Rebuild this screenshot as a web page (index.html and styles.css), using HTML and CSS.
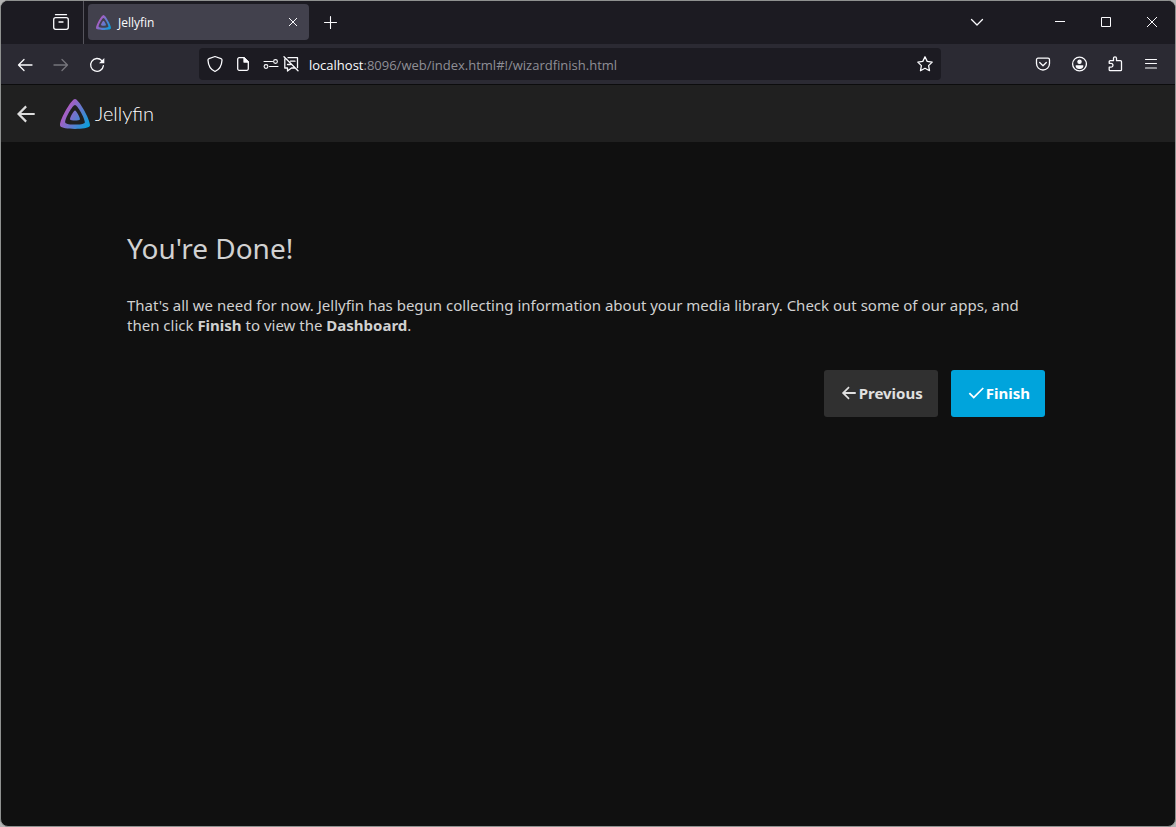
FILE: index.html
```html
<!DOCTYPE html>
<html lang="en">
<head>
<meta charset="utf-8">
<meta name="viewport" content="width=device-width, initial-scale=1">
<title>Jellyfin</title>
<link rel="stylesheet" href="styles.css">
</head>
<body>
<svg class="defs" width="0" height="0" aria-hidden="true">
  <defs>
    <linearGradient id="jelly" gradientUnits="userSpaceOnUse" x1="110" y1="213" x2="496" y2="436">
      <stop offset="0" stop-color="#aa5cc3"/><stop offset="1" stop-color="#00a4dc"/>
    </linearGradient>
    <symbol id="logo" viewBox="26 23 460 466">
      <path fill="url(#jelly)" d="M256 23.3c-61.6 0-259.8 359.4-229.6 420.1s429.3 60 459.2 0S317.6 23.3 256 23.3zm150.5 367.5c-19.6 39.3-281.1 39.8-300.9 0S215.7 115.5 256 115.5s170.1 235.9 150.5 275.3z"/>
      <path fill="url(#jelly)" d="M256 201.6c-20.4 0-86.2 119.3-76.2 139.4s142.5 19.9 152.4 0-55.7-139.4-76.2-139.4z"/>
    </symbol>
  </defs>
</svg>
<div class="window">
  <div class="titlebar">
    <button class="icon-btn view-btn" aria-label="View recent browsing">
      <svg class="icon" width="18" height="18" viewBox="0 0 18 18"><path d="M3.5 1.7h11"/><rect x="1.7" y="4.7" width="14.6" height="11.6" rx="2"/><path d="M7 9h4"/></svg>
    </button>
    <div class="tab">
      <svg width="15" height="15"><use href="#logo"/></svg>
      <span class="tab-title">Jellyfin</span>
      <button class="icon-btn tab-close" aria-label="Close tab">
        <svg class="icon sharp" width="16" height="16" viewBox="0 0 16 16"><path d="M4 4l8 8M12 4l-8 8"/></svg>
      </button>
    </div>
    <button class="icon-btn new-tab" aria-label="New tab">
      <svg class="icon thin" width="16" height="16" viewBox="0 0 16 16"><path d="M8.500 2.500v12M2.500 8.500h12"/></svg>
    </button>
    <div class="window-controls">
      <button class="icon-btn list-tabs" aria-label="List all tabs">
        <svg class="icon" width="16" height="16" viewBox="0 0 16 16"><path d="M2.500 5.500L8 11l5.500-5.500"/></svg>
      </button>
      <button class="icon-btn control" aria-label="Minimize">
        <svg class="icon sharp" width="12" height="12" viewBox="0 0 12 12"><path d="M1 5.500h10"/></svg>
      </button>
      <button class="icon-btn control" aria-label="Maximize">
        <svg class="icon sharp" width="12" height="12" viewBox="0 0 12 12"><path d="M1.500 1.500h9v9h-9z"/></svg>
      </button>
      <button class="icon-btn control" aria-label="Close">
        <svg class="icon sharp" width="12" height="12" viewBox="0 0 12 12"><path d="M1 1l10 10M11 1L1 11"/></svg>
      </button>
    </div>
  </div>
  <div class="toolbar">
    <button class="icon-btn nav-btn" aria-label="Back">
      <svg class="icon" width="16" height="16" viewBox="0 0 16 16"><path d="M15 8H1.500M7 2.500L1.500 8 7 13.500"/></svg>
    </button>
    <button class="icon-btn nav-btn" aria-label="Forward" disabled>
      <svg class="icon" width="16" height="16" viewBox="0 0 16 16"><path d="M1 8h13.500M9 2.500L14.500 8 9 13.500"/></svg>
    </button>
    <button class="icon-btn nav-btn" aria-label="Reload">
      <svg class="icon" width="16" height="16" viewBox="0 0 16 16"><path d="M12.800 3.600A6.400 6.400 0 1 0 14.400 8.600"/><path fill="currentColor" stroke="none" d="M15.300 1v5.300h-5.300z"/></svg>
    </button>
    <div class="urlbar">
      <svg class="icon shield" width="16" height="18" viewBox="0 0 16 18"><path d="M8 1.500L14 3.600c.8.300 1.100.8 1 1.600C14.700 11 12.600 14.400 8 16.500 3.400 14.400 1.300 11 1 5.200c-.1-.8.200-1.300 1-1.600z"/></svg>
      <svg class="icon page" width="14" height="16" viewBox="0 0 14 16"><path d="M8 1.700H3.200A1.500 1.500 0 0 0 1.700 3.200v9.600a1.500 1.500 0 0 0 1.500 1.500h7.600a1.500 1.500 0 0 0 1.500-1.500V6z"/><path class="solid" d="M8 1.700V6h4.300z"/></svg>
      <svg class="icon thin perms" width="16" height="14" viewBox="0 0 16 14"><path d="M1 4.500h8.500M6.500 9.500h8.500"/><circle cx="12.500" cy="4.500" r="1.900"/><circle cx="3" cy="9.500" r="1.900"/></svg>
      <svg class="icon blocked" width="16" height="16" viewBox="0 0 16 16"><path d="M5 1.700h9.500v10M12 12H8.500L4.500 15v-3H1.800V3M7.500 5.200h4.500M4.500 8.500h3M1 .8l14 14"/></svg>
      <span class="url"><span class="host">localhost</span>:8096/web/index.html#!/wizardfinish.html</span>
      <button class="icon-btn" aria-label="Bookmark this page">
        <svg class="icon" width="18" height="18" viewBox="0 0 18 18"><path d="M9 1.800l2.200 4.600 5 .7-3.600 3.500.9 5.100L9 13.300l-4.500 2.400.9-5.100L1.800 7.100l5-.7z"/></svg>
      </button>
    </div>
    <div class="actions">
      <button class="icon-btn" aria-label="Save to Pocket">
        <svg class="icon" width="16" height="16" viewBox="0 0 16 16"><path d="M3 2.200h10a1.500 1.500 0 0 1 1.500 1.500v3.800a6.500 6.500 0 0 1-13 0V3.700A1.500 1.500 0 0 1 3 2.200zM4.700 6.500L8 9.700l3.300-3.200"/></svg>
      </button>
      <button class="icon-btn" aria-label="Account">
        <svg class="icon" width="16" height="16" viewBox="0 0 16 16"><circle cx="8.500" cy="8" r="6.900"/><circle class="solid" cx="8.500" cy="5.800" r="1.600"/><path class="solid" d="M5.200 10h6.600c-.2 1.400-1.500 2.300-3.300 2.300S5.400 11.400 5.200 10z"/></svg>
      </button>
      <button class="icon-btn" aria-label="Extensions">
        <svg class="icon" width="16" height="16" viewBox="0 0 16 16"><path d="M2.200 7.300V5.700a1 1 0 0 1 1-1H6.500V2.300a1.500 1.500 0 0 1 3 0v2.400h4a1 1 0 0 1 1 1v8a1 1 0 0 1-1 1H3.200a1 1 0 0 1-1-1v-2.500h1.800a1.900 1.900 0 0 0 0-3.900z"/></svg>
      </button>
      <button class="icon-btn" aria-label="Open application menu">
        <svg class="icon thin" width="16" height="16" viewBox="0 0 16 16"><path d="M2.500 3.500h11M2.500 7.500h11M2.500 12h11"/></svg>
      </button>
    </div>
  </div>
  <header class="app-header">
    <button class="icon-btn app-back" aria-label="Go back">
      <svg width="24" height="24" viewBox="0 0 24 24"><path class="solid" d="M20.700 10.900H7.200l5.700-5.700L11.400 3.500 3 12l8.400 8.500 1.500-1.700-5.700-5.700h13.500z"/></svg>
    </button>
    <svg width="30" height="30"><use href="#logo"/></svg>
    <span class="wordmark">Jellyfin</span>
  </header>
  <main class="wizard">
    <h1>You're Done!</h1>
    <p>That's all we need for now. Jellyfin has begun collecting information about your media library. Check out some of our apps, and then click <b>Finish</b> to view the <b>Dashboard</b>.</p>
    <div class="wizard-nav">
      <button class="btn"><svg width="18" height="18" viewBox="0 0 24 24"><path class="solid" d="M21 10.700H7.200l5.600-5.600L11.300 3.300 2.500 12l8.800 8.700 1.500-1.800-5.600-5.600H21z"/></svg>Previous</button>
      <button class="btn btn-submit"><svg width="18" height="18" viewBox="0 0 24 24"><path class="solid" d="M9 16.200L4 11.200 2.300 12.900 9 19.600 22.500 6.100 20.900 4.500z"/></svg>Finish</button>
    </div>
  </main>
</div>
</body>
</html>
```
FILE: styles.css
```css
* { box-sizing: border-box; }
body {
  margin: 0;
  background: #b4b4b4;
  font-family: "Noto Sans", sans-serif;
  color: #d1d1d1;
}
.defs { position: absolute; }
svg { display: block; flex: none; }
.window {
  display: flex;
  flex-direction: column;
  min-height: 100vh;
  border: 1px solid #8f9190;
  border-radius: 8px;
  background: #101010;
  overflow: hidden;
}
.icon {
  fill: none;
  stroke: currentColor;
  stroke-width: 1.3;
  stroke-linecap: round;
  stroke-linejoin: round;
}
.icon.thin { stroke-width: 1.1; }
.icon.sharp { stroke-width: 1; stroke-linecap: butt; stroke-linejoin: miter; }
.icon .solid, .solid { fill: currentColor; }
.icon-btn {
  display: flex;
  align-items: center;
  justify-content: center;
  flex: none;
  padding: 0;
  border: 0;
  background: none;
  color: #fbfbfe;
}
.titlebar {
  display: flex;
  align-items: center;
  height: 43px;
  padding-bottom: 1px;
  background: #1c1b22;
}
.view-btn {
  width: 83px;
  height: 43px;
  padding-left: 37px;
  border-right: 1px solid #55545c;
}
.tab {
  display: flex;
  align-items: center;
  gap: 7px;
  width: 221px;
  height: 36px;
  margin-left: 4px;
  padding: 0 8px;
  border-radius: 4px;
  background: #42414d;
  color: #fbfbfe;
}
.tab-title { flex: 1; font: 12px "Open Sans", sans-serif; }
.new-tab { margin-left: 13px; }
.window-controls { display: flex; margin-left: auto; }
.list-tabs { width: 16px; margin-right: 52px; }
.control { width: 46px; height: 42px; }
.toolbar {
  display: flex;
  align-items: center;
  height: 41px;
  padding: 0 16px;
  border-bottom: 1px solid #0c0c0d;
  background: #2b2a33;
}
.nav-btn { width: 16px; margin-right: 20px; padding-top: 1px; }
.nav-btn:disabled { color: #76757c; }
.urlbar {
  display: flex;
  align-items: center;
  flex: 1;
  height: 32px;
  margin-left: 74px;
  padding: 0 7px 0 8px;
  border-radius: 4px;
  background: #1c1b22;
  color: #fbfbfe;
}
.page { margin-left: 13px; }
.perms { margin-left: 13px; }
.blocked { margin-left: 4px; }
.url {
  flex: 1;
  margin-left: 10px;
  padding-top: 2px;
  font: 13px "Open Sans", sans-serif;
  color: #8f8f96;
}
.host { color: #fbfbfe; }
.actions { display: flex; gap: 20px; margin-left: 94px; }
.app-header {
  display: flex;
  align-items: center;
  height: 57px;
  padding: 0 13px;
  background: #202020;
}
.app-back { margin-right: 22px; color: #dddddd; }
.wordmark {
  margin-left: 5px;
  padding-bottom: 2px;
  font: 300 20px Lato, sans-serif;
  color: #ffffff;
}
.wizard {
  width: 100%;
  max-width: 922px;
  margin: 0 auto;
  padding-top: 87px;
}
h1 { margin: 0; font-size: 28px; font-weight: 400; line-height: 38px; }
p { margin: 28px 0 0; font-size: 15px; line-height: 20px; }
.wizard-nav {
  display: flex;
  justify-content: flex-end;
  gap: 13px;
  margin: 35px 4px 0 0;
}
.btn {
  display: flex;
  align-items: center;
  gap: 1px;
  height: 47px;
  padding: 0 15px 2px 16px;
  border: 0;
  border-radius: 3px;
  background: #303030;
  color: #e0e0e0;
  font: 700 15px "Noto Sans", sans-serif;
}
.btn-submit { background: #00a4dc; color: #ffffff; }
```
